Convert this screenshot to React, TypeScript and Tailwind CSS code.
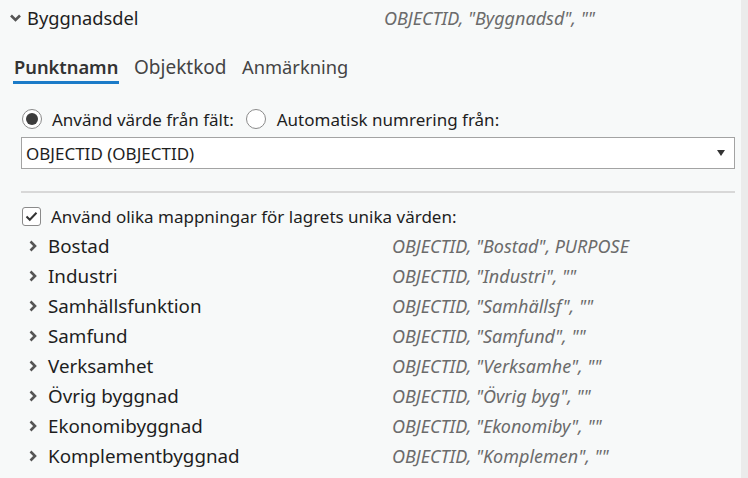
import React from "react";

const F = { fontFamily: '"Noto Sans", "Open Sans", sans-serif' };

function ChevronRight() {
  return (
    <svg width="8" height="12" viewBox="0 0 8 12" className="shrink-0">
      <path d="M1.5 1.5 L6 6 L1.5 10.5" fill="none" stroke="#555" strokeWidth="2.6" strokeLinecap="butt" strokeLinejoin="miter" />
    </svg>
  );
}

function ChevronDown() {
  return (
    <svg width="11" height="8" viewBox="0 0 11 8" className="shrink-0">
      <path d="M1 1.5 L5.5 6 L10 1.5" fill="none" stroke="#555" strokeWidth="2.6" />
    </svg>
  );
}

const rows: [string, string][] = [
  ["Bostad", 'OBJECTID, "Bostad", PURPOSE'],
  ["Industri", 'OBJECTID, "Industri", ""'],
  ["Samhällsfunktion", 'OBJECTID, "Samhällsf", ""'],
  ["Samfund", 'OBJECTID, "Samfund", ""'],
  ["Verksamhet", 'OBJECTID, "Verksamhe", ""'],
  ["Övrig byggnad", 'OBJECTID, "Övrig byg", ""'],
  ["Ekonomibyggnad", 'OBJECTID, "Ekonomiby", ""'],
  ["Komplementbyggnad", 'OBJECTID, "Komplemen", ""'],
];

export default function App() {
  return (
    <div className="flex w-[748px] h-[478px] overflow-hidden bg-[#f7f9f9] text-[#1e1e1e]" style={F}>
      <div className="flex-1 flex flex-col">
        {/* header */}
        <div className="h-[36px] flex items-center">
          <div className="w-[384px] flex items-center pl-[10px]">
            <ChevronDown />
            <span className="ml-[6px] text-[18.3px] leading-none">Byggnadsdel</span>
          </div>
          <span className="italic text-[#6b6b6b] text-[18px] leading-none">OBJECTID, "Byggnadsd", ""</span>
        </div>

        {/* tabs */}
        <div className="mt-[14px] h-[34px] flex pl-[13px]">
          <div className="w-[106px] flex flex-col">
            <span className="pt-[4px] leading-[26px] text-[18.3px] font-semibold text-[#333] pl-[1px]">Punktnamn</span>
            <div className="mt-[1px] h-[3px] bg-[#1b7bc8]" />
          </div>
          <div className="ml-[15px] w-[108px] flex flex-col">
            <span className="pt-[4px] leading-[26px] text-[19px] text-[#444]">Objektkod</span>
          </div>
          <div className="flex flex-col">
            <span className="pt-[4px] leading-[26px] text-[18.3px] text-[#444]">Anmärkning</span>
          </div>
        </div>

        {/* radios */}
        <div className="mt-[21px] h-[28px] flex items-center pl-[22px]">
          <div className="w-[20px] h-[20px] rounded-full border-[1.5px] border-[#8a8a8a] bg-white flex items-center justify-center">
            <div className="w-[12px] h-[12px] rounded-full bg-[#3c3c3c]" />
          </div>
          <span className="ml-[10px] text-[17px] leading-none">Använd värde från fält:</span>
          <div className="ml-[12px] w-[20px] h-[20px] rounded-full border-[1.5px] border-[#8a8a8a] bg-white" />
          <span className="ml-[11px] text-[17px] leading-none">Automatisk numrering från:</span>
        </div>

        {/* dropdown */}
        <div className="mt-[4px] ml-[21px] mr-[6px] h-[32px] border border-[#a3a3a3] bg-white flex items-center pl-[4px] pr-[9px]">
          <span className="flex-1 text-[17px] leading-none">OBJECTID (OBJECTID)</span>
          <svg width="8" height="6" viewBox="0 0 8 6">
            <path d="M0 0 L8 0 L4 6 Z" fill="#333" />
          </svg>
        </div>

        {/* separator */}
        <div className="mt-[22px] ml-[21px] mr-[6px] h-[2px] bg-[#d8d8d8]" />

        {/* checkbox */}
        <div className="mt-[8px] h-[30px] flex items-center pl-[22px]">
          <div className="w-[19px] h-[19px] rounded-[3px] border-[1.5px] border-[#8a8a8a] bg-white flex items-center justify-center">
            <svg width="13" height="11" viewBox="0 0 13 11">
              <path d="M1.5 5.5 L4.8 8.8 L11.5 1.8" fill="none" stroke="#333" strokeWidth="2" />
            </svg>
          </div>
          <span className="ml-[10px] text-[17px] leading-none">Använd olika mappningar för lagrets unika värden:</span>
        </div>

        {/* rows */}
        {rows.map(([name, val]) => (
          <div key={name} className="h-[30px] flex items-center shrink-0">
            <div className="w-[392px] flex items-center pl-[29px]">
              <ChevronRight />
              <span className="ml-[11px] text-[18.8px] leading-none">{name}</span>
            </div>
            <span className="italic text-[#6b6b6b] text-[18px] leading-none">{val}</span>
          </div>
        ))}
      </div>
      <div className="w-[7px] bg-[#ebebeb]" />
    </div>
  );
}
